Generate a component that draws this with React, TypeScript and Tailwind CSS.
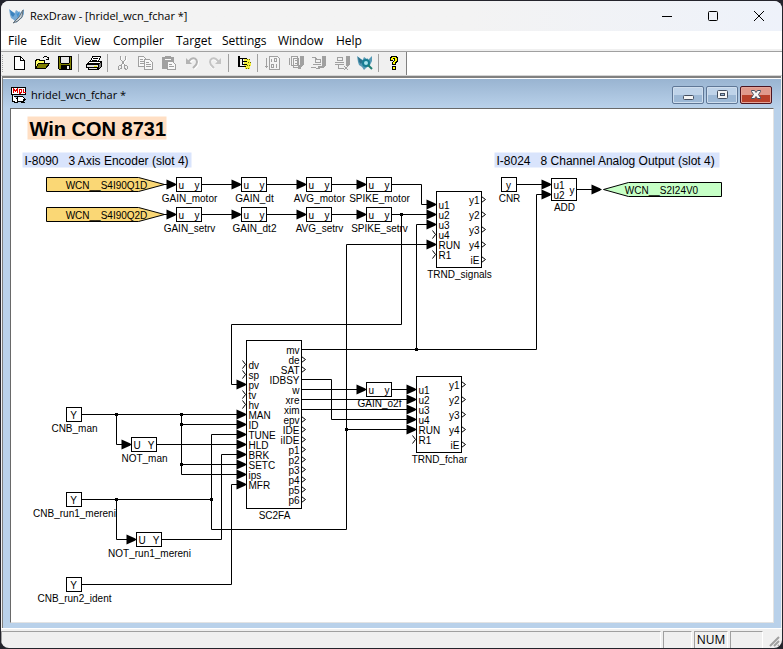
import type { ReactNode } from "react";

type Point = [number, number];

const MENU = ["File", "Edit", "View", "Compiler", "Target", "Settings", "Window", "Help"];

/* ---------- toolbar icons, 16 x 16 grid ---------- */

function Icon({ children }: { children: ReactNode }) {
  return (
    <svg width="16" height="16" viewBox="0 0 16 16" fill="none" stroke="#000" shapeRendering="crispEdges" aria-hidden="true">
      {children}
    </svg>
  );
}

const NewIcon = () => (
  <Icon>
    <path d="M3.5 1.5h6l4 4v9h-10z" fill="#fff" />
    <path d="M9.5 1.5v4h4" />
  </Icon>
);

const OpenIcon = () => (
  <Icon>
    <path d="M1.5 13.5v-8h1v-1h3v1h5v3" fill="#ffff66" />
    <path d="M1.5 13.5l3-5h11l-4 5z" fill="#808000" />
    <path d="M9 2.5h1M10 1.5h3M13 2.5h1M14.5 2v3M12 4.5h3" />
  </Icon>
);

const SaveIcon = () => (
  <Icon>
    <path d="M1.5 1.5h13v13h-12l-1-1z" fill="#808000" />
    <path d="M4 2h8v6H4z" fill="#e8e8e8" stroke="none" />
    <path d="M3.5 2v6M4 8.5h8M12.5 2v6" />
    <path d="M4 10h9v4H4z" fill="#000" stroke="none" />
    <path d="M10 11h2v3h-2z" fill="#f0f0f0" stroke="none" />
  </Icon>
);

const PrintIcon = () => (
  <Icon>
    <path d="M4.5 6.5l2-5h8l-2 5z" fill="#fff" />
    <path d="M7 3.5h5M6 5.5h5" />
    <path d="M0.5 9.5l3-3h12l-3 3z" fill="#fff" />
    <path d="M0.5 9.5h12v3h-12zM2.500 12.500h9v2h-9z" fill="#e0e0e0" />
    <path d="M12.5 9.5l3-3v5l-3 3z" fill="#808080" />
    <path d="M1 8.500h12" />
    <path d="M8 11h3" stroke="#e8e800" />
  </Icon>
);

const CutIcon = () => (
  <Icon>
    <path d="M6.500 2v3l4 6M11.500 2v3l-4 6" stroke="#fff" />
    <path
      d="M5.500 1v3l4 6M10.500 1v3l-4 6M4.500 10.500h2v3h-1l-1 1h-1v-3zM9.500 10.500h2l1 1v2l-1 1h-1l-1-2z"
      stroke="#a0a0a0"
    />
  </Icon>
);

const CopyIcon = () => (
  <Icon>
    <g stroke="#a0a0a0" fill="#f8f8f8">
      <path d="M0.5 1.500h5l3 3v7h-8z" />
      <path d="M2 4.500h3M2 6.500h4M2 8.500h4" />
      <path d="M6.500 4.500h5l3 3v7h-8z" />
      <path d="M8 7.500h3M8 9.500h5M8 11.500h5" />
    </g>
  </Icon>
);

const PasteIcon = () => (
  <Icon>
    <path d="M1 2h12v12H1zM4 1h6v2H4z" fill="#a0a0a0" stroke="none" />
    <path d="M4 4.500h6" stroke="#f8f8f8" />
    <path d="M6.500 6.500h5l3 3v5h-8z" fill="#f8f8f8" stroke="#a0a0a0" />
    <path d="M8 9.500h3M8 11.500h5" stroke="#a0a0a0" />
  </Icon>
);

const UndoIcon = () => (
  <Icon>
    <g shapeRendering="auto" strokeWidth="2">
      <path d="M5 8l3-3c3-2 6 0 6 3s-2 4-4 6" stroke="#fff" />
      <path d="M4 7l3-3c3-2 6 0 6 3s-2 4-4 6" stroke="#b4b4b4" />
      <path d="M2 3v6h6z" fill="#b4b4b4" stroke="none" />
    </g>
  </Icon>
);

const RedoIcon = () => (
  <Icon>
    <g shapeRendering="auto" strokeWidth="2">
      <path d="M12 8L9 5C6 3 3 5 3 8s2 4 4 6" stroke="#fff" />
      <path d="M12 7L9 4C6 2 3 4 3 7s2 4 4 6" stroke="#c4c4c4" />
      <path d="M14 3v6H8z" fill="#c4c4c4" stroke="none" />
    </g>
  </Icon>
);

const TreeIcon = () => (
  <Icon>
    <path d="M2 1h2v11H2z" fill="#000" stroke="none" />
    <path d="M8 4h6v3h1v4h-1v3H9v-2H8z" fill="#f5f03a" stroke="none" />
    <path d="M3 3.500h8M3 11.500h7M6.500 3v6M6 6.500h5M6 9.500h5" />
    <path d="M11 4.500h3M12 7.500h3M11 10.500h3M10 13.500h4" stroke="#6d6d00" strokeDasharray="1 1" />
  </Icon>
);

const DownloadIcon = () => (
  <Icon>
    <g stroke="#a0a0a0">
      <path d="M1.500 3v10M0 11.500h3M4.500 1.500h8l2 2v11h-10z" fill="#f4f4f4" />
      <path d="M6.500 4v3M9 3.500h2v3H9zM6 9.500h2v3H6zM11.500 9v4" />
    </g>
  </Icon>
);

const DownloadTargetIcon = () => (
  <Icon>
    <g stroke="#a0a0a0">
      <path d="M1.500 3v7M3.500 1.500h6v9h-6zM5.500 3.500h5v9h-5z" fill="#f4f4f4" />
      <path d="M7 5.500h2M7 8.500h2" />
      <path d="M12 1h4v9l-3 2v2h-3v-4h2z" fill="#a0a0a0" stroke="none" />
    </g>
  </Icon>
);

const UploadIcon = () => (
  <Icon>
    <g stroke="#a0a0a0">
      <path d="M1 2.500h3l2 2M4.500 7.500v-3h5v3zM2 9.500h8M0 12.500h4l2 1h3" />
      <path d="M11 1h4v9l-2 3H7v-2h4z" fill="#a0a0a0" stroke="none" />
    </g>
  </Icon>
);

const OnlineIcon = () => (
  <Icon>
    <g stroke="#a0a0a0">
      <path d="M3.500 5.500v-3h5v3zM1 7.500h9M1 9.500h9M4.500 10v3h5M10 11l4 4M14 11l-4 4" />
      <path d="M12 1h4v8l-2 2h-2z" fill="#a0a0a0" stroke="none" />
    </g>
  </Icon>
);

function Bird({ lens }: { lens?: boolean }) {
  return (
    <svg width="16" height="16" viewBox="0 0 16 16" fill="none" aria-hidden="true">
      <path d="M0 1l4 3 2 1 1-3 3 2 1 1 4-4v5l-2 4-4 3-2 2-2-3-3-2-1-3z" fill={lens ? "#5599b5" : "#75a9d5"} />
      <path d="M1 2l5 4-2 3-2-2z" fill={lens ? "#2c718c" : "#3b82bd"} />
      <path d="M6 2l2 4 3-3-2 7z" fill={lens ? "#2f8099" : "#4391cf"} />
      {lens ? (
        <>
          <circle cx="9" cy="8" r="3" stroke="#167d93" fill="#a9e4ee" strokeWidth="2" />
          <path d="M11 10l4 4" stroke="#1d7c70" strokeWidth="2" />
        </>
      ) : (
        <path d="M14 2l-4 7-5 5-1 1 5-2 4-4z" fill="#c9d0d6" stroke="#66737d" />
      )}
    </svg>
  );
}

const HelpIcon = () => (
  <Icon>
    <path d="M4 2h1V1h6v1h1v5h-1v1h-1v2H6V7h1V6h1V4H7v2H4zM6 11h4v4H6z" fill="#000" stroke="none" />
    <path d="M5 3h1V2h4v1h1v3h-1v1H9v2H7V7h1V6h1V3H7v2H5zM7 12h2v2H7z" fill="#ffff00" stroke="none" />
  </Icon>
);

const TOOL_GROUPS: { name: string; icon: ReactNode }[][] = [
  [
    { name: "New", icon: <NewIcon /> },
    { name: "Open", icon: <OpenIcon /> },
    { name: "Save", icon: <SaveIcon /> },
  ],
  [{ name: "Print", icon: <PrintIcon /> }],
  [
    { name: "Cut", icon: <CutIcon /> },
    { name: "Copy", icon: <CopyIcon /> },
    { name: "Paste", icon: <PasteIcon /> },
    { name: "Undo", icon: <UndoIcon /> },
    { name: "Redo", icon: <RedoIcon /> },
  ],
  [{ name: "Project tree", icon: <TreeIcon /> }],
  [
    { name: "Compile", icon: <DownloadIcon /> },
    { name: "Compile and download", icon: <DownloadTargetIcon /> },
    { name: "Upload", icon: <UploadIcon /> },
    { name: "Online", icon: <OnlineIcon /> },
    { name: "Watch", icon: <Bird lens /> },
  ],
  [{ name: "About", icon: <HelpIcon /> }],
];

/* ---------- block diagram ---------- */

const WIRES: { points: Point[] }[] = [
  { points: [[163, 184], [176, 184]] },
  { points: [[201, 184], [241, 184]] },
  { points: [[266, 184], [306, 184]] },
  { points: [[331, 184], [366, 184]] },
  { points: [[391, 184], [421, 184], [421, 204], [436, 204]] },
  { points: [[163, 214], [176, 214]] },
  { points: [[201, 214], [241, 214]] },
  { points: [[266, 214], [306, 214]] },
  { points: [[331, 214], [366, 214]] },
  { points: [[391, 214], [436, 214]] },
  { points: [[401, 214], [401, 324], [231, 324], [231, 384], [246, 384]] },
  { points: [[416, 349], [416, 224], [436, 224]] },
  { points: [[301, 349], [536, 349], [536, 194], [551, 194]] },
  { points: [[516, 184], [551, 184]] },
  { points: [[576, 189], [601, 189]] },
  { points: [[211, 499], [211, 529], [346, 529], [346, 244], [436, 244]] },
  { points: [[346, 429], [416, 429]] },
  { points: [[301, 379], [331, 379], [331, 419], [416, 419]] },
  { points: [[301, 389], [366, 389]] },
  { points: [[391, 389], [416, 389]] },
  { points: [[301, 399], [416, 399]] },
  { points: [[301, 409], [416, 409]] },
  { points: [[81, 414], [246, 414]] },
  { points: [[116, 414], [116, 444], [131, 444]] },
  { points: [[156, 444], [246, 444]] },
  { points: [[181, 424], [246, 424]] },
  { points: [[181, 464], [246, 464]] },
  { points: [[181, 414], [181, 474], [246, 474]] },
  { points: [[81, 499], [211, 499], [211, 434], [246, 434]] },
  { points: [[116, 499], [116, 539], [136, 539]] },
  { points: [[161, 539], [221, 539], [221, 454], [246, 454]] },
  { points: [[81, 584], [231, 584], [231, 484], [246, 484]] },
];

const JUNCTIONS: Point[] = [
  [401, 214], [416, 349], [346, 429], [116, 414], [181, 414],
  [181, 424], [181, 464], [116, 499], [211, 499],
];

type Port = { name: string; y: number; open?: boolean };
type BlockProps = { x: number; y: number; w: number; h: number; label: string; ins?: Port[]; outs?: Port[] };

const column = (names: string[], start: number, step: number, open: string[] = []): Port[] =>
  names.map((name, i) => ({ name, y: start + i * step, open: open.includes(name) }));

const gain = (x: number, y: number, label: string, a = "u", b = "y"): BlockProps => ({
  x, y: y - 7, w: 25, h: 14, label, ins: [{ name: a, y }], outs: [{ name: b, y }],
});

const TREND_OUTS = ["y1", "y2", "y3", "y4", "iE"];
const TREND_INS = ["u1", "u2", "u3", "u4", "RUN", "R1"];
const SC_INS = ["dv", "sp", "pv", "tv", "hv", "MAN", "ID", "TUNE", "HLD", "BRK", "SETC", "ips", "MFR"];
const SC_OUTS = ["mv", "de", "SAT", "IDBSY", "w", "xre", "xim", "epv", "IDE", "iIDE", "p1", "p2", "p3", "p4", "p5", "p6"];

const BLOCKS: BlockProps[] = [
  gain(176, 184, "GAIN_motor"),
  gain(241, 184, "GAIN_dt"),
  gain(306, 184, "AVG_motor"),
  gain(366, 184, "SPIKE_motor"),
  gain(176, 214, "GAIN_setrv"),
  gain(241, 214, "GAIN_dt2"),
  gain(306, 214, "AVG_setrv"),
  gain(366, 214, "SPIKE_setrv"),
  gain(366, 389, "GAIN_o2f"),
  gain(131, 444, "NOT_man", "U", "Y"),
  gain(136, 539, "NOT_run1_mereni", "U", "Y"),
  {
    x: 551, y: 178, w: 25, h: 22, label: "ADD",
    ins: column(["u1", "u2"], 184, 10),
    outs: [{ name: "y", y: 189 }],
  },
  {
    x: 436, y: 191, w: 45, h: 76, label: "TRND_signals",
    ins: column(TREND_INS, 204, 10, ["u4", "R1"]),
    outs: column(TREND_OUTS, 199, 15, TREND_OUTS),
  },
  {
    x: 416, y: 376, w: 45, h: 76, label: "TRND_fchar",
    ins: column(TREND_INS, 389, 10, ["R1"]),
    outs: column(TREND_OUTS, 384, 15, TREND_OUTS),
  },
  {
    x: 246, y: 340, w: 55, h: 168, label: "SC2FA",
    ins: column(SC_INS, 364, 10, ["dv", "sp", "tv", "hv"]),
    outs: column(SC_OUTS, 349, 10, ["de", "SAT", "epv", "IDE", "iIDE", "p1", "p2", "p3", "p4", "p5", "p6"]),
  },
];

const CONSTANTS = [
  { x: 66, y: 414, symbol: "Y", label: "CNB_man" },
  { x: 66, y: 499, symbol: "Y", label: "CNB_run1_mereni" },
  { x: 66, y: 584, symbol: "Y", label: "CNB_run2_ident" },
  { x: 501, y: 184, symbol: "y", label: "CNR" },
];

function T({ x, y, anchor = "start", children }: { x: number; y: number; anchor?: "start" | "middle" | "end"; children: ReactNode }) {
  return (
    <text x={x} y={y} textAnchor={anchor} fill="#000" stroke="none">
      {children}
    </text>
  );
}

function Block({ x, y, w, h, label, ins = [], outs = [] }: BlockProps) {
  return (
    <g>
      <rect x={x} y={y} width={w} height={h} fill="#fff" />
      {ins.map((p) => (
        <g key={p.name}>
          {p.open && <path d={`M${x - 4} ${p.y - 4}l3 4l-3 4`} fill="none" />}
          <T x={x + 2} y={p.y + 4}>{p.name}</T>
        </g>
      ))}
      {outs.map((p) => (
        <g key={p.name}>
          {p.open && <path d={`M${x + w} ${p.y - 3}l4 3l-4 3`} fill="none" />}
          <T x={x + w - 2} y={p.y + 4} anchor="end">{p.name}</T>
        </g>
      ))}
      <T x={x + Math.ceil(w / 2)} y={y + h + 10} anchor="middle">{label}</T>
    </g>
  );
}

function InputTag({ y, name }: { y: number; name: string }) {
  return (
    <g>
      <path d={`M46 ${y - 7}h92l26 7l-26 7h-92z`} fill="#fad775" />
      <T x={106} y={y + 4} anchor="middle">{name}</T>
    </g>
  );
}

function Diagram() {
  return (
    <svg
      width="762"
      height="512"
      viewBox="0 0 762 512"
      className="block max-w-none font-['Liberation_Sans',Arial,sans-serif] text-[10px]"
      role="img"
      aria-label="hridel_wcn_fchar block diagram"
    >
      <g transform="translate(-10.5 -108.5)" stroke="#000" strokeWidth="1">
        <rect x="27" y="116" width="139" height="23" fill="#ffdfc4" stroke="none" />
        <text x="29" y="135" className="text-[20px] font-bold" fill="#000" stroke="none">Win CON 8731</text>
        <rect x="22" y="152" width="169" height="15" fill="#d9e4fc" stroke="none" />
        <text x="24" y="164" className="text-[12px] whitespace-pre" fill="#000" stroke="none">{"I-8090   3 Axis Encoder (slot 4)"}</text>
        <rect x="494" y="152" width="225" height="15" fill="#d9e4fc" stroke="none" />
        <text x="496" y="164" className="text-[12px] whitespace-pre" fill="#000" stroke="none">{"I-8024   8 Channel Analog Output (slot 4)"}</text>

        {BLOCKS.map((b) => <Block key={b.label} {...b} />)}
        {CONSTANTS.map((c) => (
          <g key={c.label}>
            <rect x={c.x} y={c.y - 7} width="15" height="14" fill="#fff" />
            <T x={c.x + 7} y={c.y + 4} anchor="middle">{c.symbol}</T>
            <T x={c.x + 8} y={c.y + 17} anchor="middle">{c.label}</T>
          </g>
        ))}
        <InputTag y={184} name="WCN__S4I90Q1D" />
        <InputTag y={214} name="WCN__S4I90Q2D" />
        <path d="M603 189l25-7h93v14h-93z" fill="#c6ffc6" />
        <T x={661} y={193} anchor="middle">WCN__S2I24V0</T>

        {WIRES.map(({ points }, i) => {
          const [ex, ey] = points[points.length - 1];
          return (
            <g key={i}>
              <polyline points={points.map((p) => p.join(",")).join(" ")} fill="none" />
              <path d={`M${ex - 10} ${ey - 5}l9 4v2l-9 4z`} fill="#000" stroke="none" />
            </g>
          );
        })}
        {JUNCTIONS.map(([x, y]) => (
          <rect key={`${x}-${y}`} x={x - 1} y={y - 1} width="2" height="2" fill="#000" />
        ))}
      </g>
    </svg>
  );
}

/* ---------- window ---------- */

function ChildButton({ name, danger, children }: { name: string; danger?: boolean; children: ReactNode }) {
  return (
    <button
      type="button"
      aria-label={name}
      className={
        danger
          ? "flex h-[18px] w-8 items-center justify-center rounded-[2px] border border-[#4c1420] bg-linear-to-b from-[#e0998c] from-50% to-[#b8402a] to-50% shadow-[inset_0_0_0_1px_#e5a599]"
          : "flex h-[18px] w-8 items-center justify-center rounded-[2px] border border-[#5f7796] bg-linear-to-b from-[#bfd3e9] from-50% to-[#9db8d5] to-50% shadow-[inset_0_0_0_1px_#cfdeee]"
      }
    >
      <svg width="14" height="12" viewBox="0 0 14 12" fill="none" stroke="#454f60" aria-hidden="true">
        {children}
      </svg>
    </button>
  );
}

function StatusPane({ className, children }: { className: string; children?: ReactNode }) {
  return (
    <div className={`h-[17px] border-t border-l border-[#a0a0a0] border-r border-r-white ${className}`}>{children}</div>
  );
}

export default function App() {
  return (
    <div className="flex h-screen flex-col overflow-hidden bg-[#24242c] p-px font-['Open_Sans','Noto_Sans',sans-serif] text-[12px] text-black">
      <div className="flex min-h-0 flex-1 flex-col overflow-hidden rounded-lg bg-[#f0f0f0]">
        <header className="flex h-[30px] shrink-0 items-center bg-linear-to-r from-[#f3f3f3] from-60% to-[#eef2fa]">
          <span className="mr-[5px] ml-2"><Bird /></span>
          <h1 className="flex-1 text-[11px] whitespace-nowrap">RexDraw - [hridel_wcn_fchar *]</h1>
          <button type="button" aria-label="Minimize" className="flex h-full w-[46px] items-center justify-center">
            <svg width="10" height="10" viewBox="0 0 10 10" stroke="#000"><path d="M0 5.500h10" /></svg>
          </button>
          <button type="button" aria-label="Maximize" className="flex h-full w-[46px] items-center justify-center">
            <svg width="10" height="10" viewBox="0 0 10 10" stroke="#000" fill="none"><rect x="0.500" y="0.500" width="9" height="9" rx="1" /></svg>
          </button>
          <button type="button" aria-label="Close" className="flex h-full w-[46px] items-center justify-center">
            <svg width="10" height="10" viewBox="0 0 10 10" stroke="#000"><path d="M0 0l10 10M10 0L0 10" /></svg>
          </button>
        </header>

        <nav className="grid h-[18px] shrink-0 grid-cols-[32px_34px_39px_63px_46px_56px_58px_auto] justify-start bg-white pl-[7px]">
          {MENU.map((item) => (
            <button key={item} type="button" className="text-left leading-[20px]">{item}</button>
          ))}
        </nav>

        <div className="mt-[2px] flex h-[25px] shrink-0 border-t border-b border-t-[#a0a0a0] border-b-[#d4d4d4] bg-white">
          <div className="flex items-start border-r border-[#808080] bg-[#f0f0f0] pr-px pl-px">
            <span className="mt-[3px] mr-1 h-[17px] w-px border-l border-dotted border-[#a0a0a0]" />
            {TOOL_GROUPS.map((group, i) => (
              <div key={i} className="flex items-center">
                {i > 0 && <span className="mr-[3px] ml-[2px] h-[18px] w-px bg-[#a0a0a0]" />}
                {group.map(({ name, icon }) => (
                  <button key={name} type="button" aria-label={name} className="flex h-[22px] w-[23px] items-center justify-center">
                    {icon}
                  </button>
                ))}
              </div>
            ))}
          </div>
        </div>

        <main className="mx-px flex min-h-0 flex-1 flex-col border-t-2 border-l border-[#808080] bg-[#b9d1ea] px-[7px] pb-[5px]">
          <div className="-mx-[7px] flex h-[30px] shrink-0 items-center border-t border-white bg-linear-to-b from-[#99b4d1] to-[#b9d1ea] pt-[3px] pr-[9px] pl-2">
            <svg width="16" height="16" viewBox="0 0 16 16" fill="none" stroke="#000" shapeRendering="crispEdges" aria-hidden="true">
              <path d="M0.500 0.500h14v7h-14z" fill="#fff" />
              <path d="M2.500 6V2l2 2 2-2v4M8.500 2v4h1l1-1V3l-1-1zM12.500 2v3.500h2" stroke="#e00000" />
              <path d="M1.500 8v6l2 1h3v-4h-2M6.500 9.500h5l2 2v2l-2 1h-5z" fill="#fff" />
              <path d="M12 12.500h3M3 9.500h3M10 15.500h4" />
            </svg>
            <h2 className="ml-1 flex-1 text-[11px] whitespace-nowrap">hridel_wcn_fchar *</h2>
            <div className="flex gap-[2px]">
              <ChildButton name="Minimize diagram">
                <rect x="2.500" y="6.500" width="10" height="4" rx="1" fill="#f4f4f4" />
              </ChildButton>
              <ChildButton name="Restore diagram">
                <rect x="2.500" y="1.500" width="10" height="8" rx="1" fill="#f4f4f4" />
                <rect x="5.500" y="4.500" width="4" height="2" fill="#9db8d5" />
              </ChildButton>
              <ChildButton name="Close diagram" danger>
                <path
                  d="M2.500 1.500h3l1.500 2 1.500-2h3v1l-2 3 2 3v1h-3l-1.500-2-1.500 2h-3v-1l2-3-2-3z"
                  fill="#f6f6f6"
                />
              </ChildButton>
            </div>
          </div>
          <div className="min-h-0 flex-1 overflow-hidden border border-t-[#696969] border-r-[#e3e3e3] border-b-[#e3e3e3] border-l-[#696969] bg-white">
            <Diagram />
          </div>
        </main>

        <footer className="flex h-5 shrink-0 items-end gap-[2px] border-t border-white">
          <StatusPane className="flex-1" />
          <StatusPane className="w-[29px]" />
          <StatusPane className="w-[34px] text-center leading-[16px]">NUM</StatusPane>
          <StatusPane className="w-[33px]" />
          <svg width="17" height="16" viewBox="0 0 17 16" stroke="#a0a0a0" aria-hidden="true">
            <path d="M5 14l9-9M9 14l5-5M13 14l1-1" strokeWidth="2" />
          </svg>
        </footer>
      </div>
    </div>
  );
}
